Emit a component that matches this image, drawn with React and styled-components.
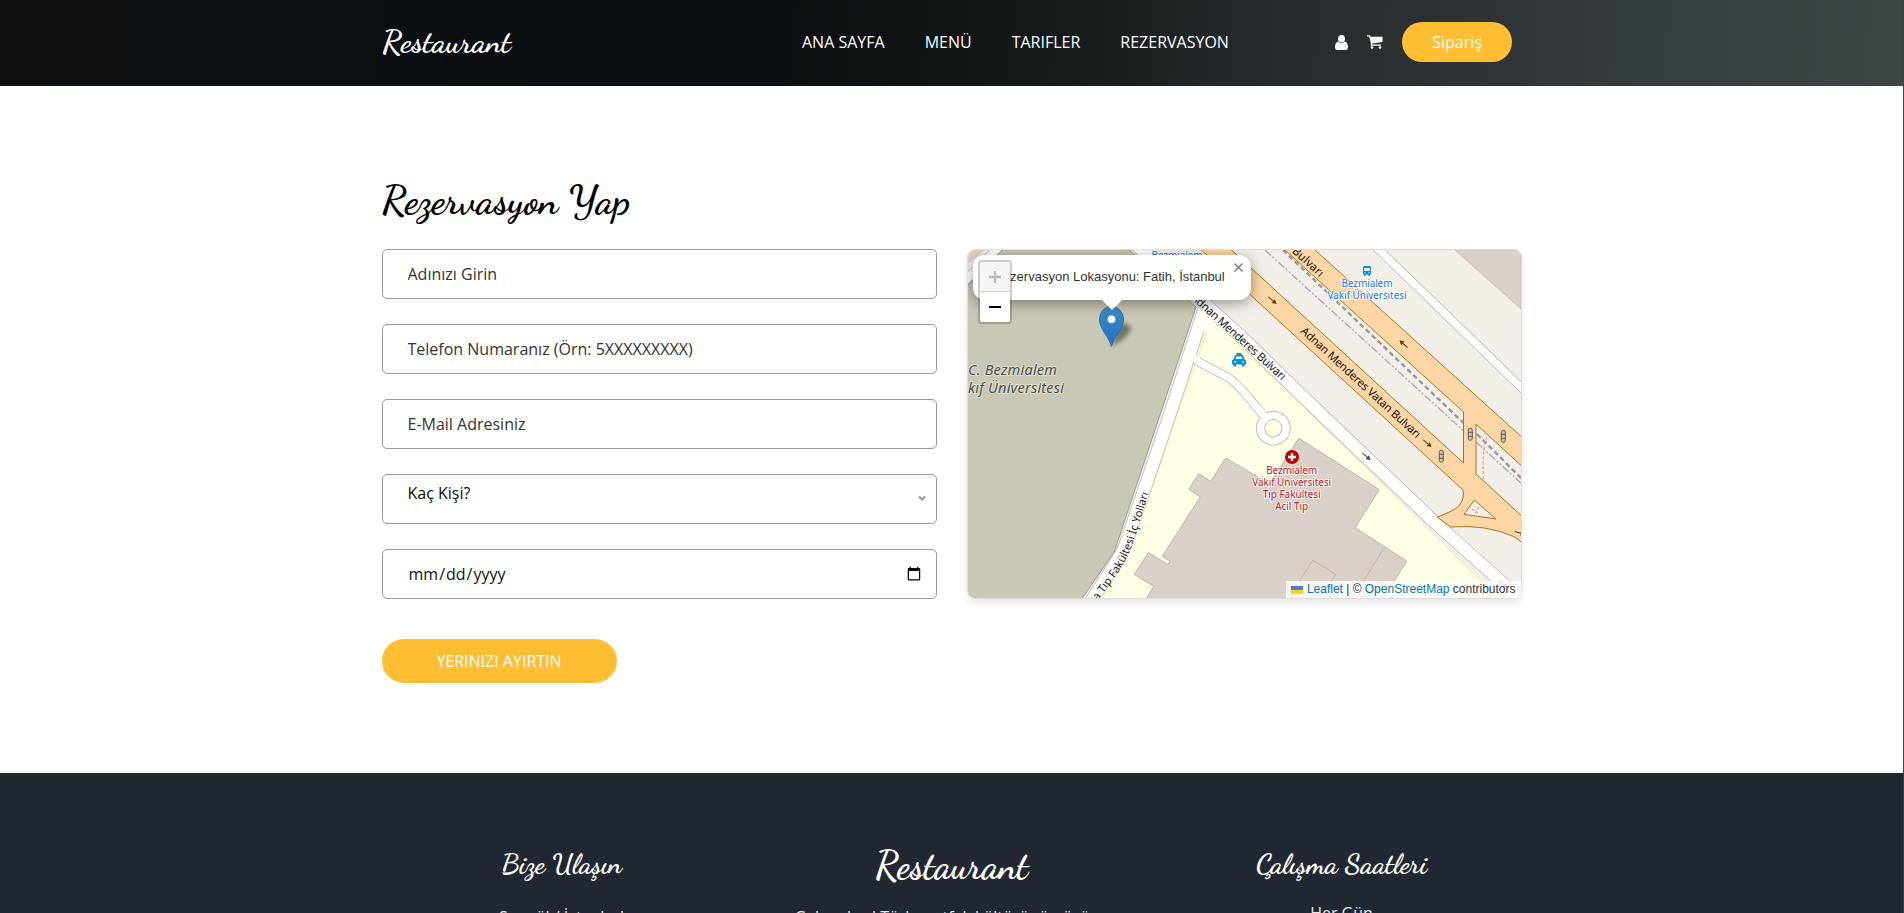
import React from 'react';
import styled, { createGlobalStyle } from 'styled-components';

const GlobalStyle = createGlobalStyle`
  * { box-sizing: border-box; }
  html, body { margin: 0; height: 913px; overflow: hidden; background: #fff; }
  body { font-family: "Open Sans", sans-serif; font-size: 16px; line-height: 24px; color: #0c0c0c; }
`;

const script = '"Dancing Script", cursive';

const Page = styled.div`
  height: 913px;
  overflow: hidden;
  border-right: 1px solid #3b4444;
`;

const Header = styled.header`
  height: 86px;
  margin-right: -1px;
  background: linear-gradient(94deg, #0d0f11 0%, #0c0f11 41%, #101415 48%, #171c1d 57%, #24292b 65%, #2a2f31 72%, #2f3436 79%, #353c3d 85%, #394142 93%, #3e4646 100%);
`;

const Container = styled.div`
  width: 1140px;
  margin: 0 auto;
`;

const NavBar = styled(Container)`
  height: 84px;
  display: flex;
  align-items: center;
`;

const Logo = styled.a`
  width: 420px;
  font: 700 32px/40px ${script};
  color: #fff;
`;

const NavList = styled.nav`
  display: flex;
  gap: 40px;
  width: 533px;
  color: #fff;
  white-space: nowrap;
`;

const NavIcons = styled.div`
  display: flex;
  align-items: center;
  gap: 19px;
  width: 67px;
  color: #fff;
`;

const OrderButton = styled.a`
  width: 110px;
  height: 40px;
  border-radius: 20px;
  background: #ffbe33;
  color: #fff;
  text-align: center;
  line-height: 41px;
`;

const Booking = styled.section`
  height: 687px;
  padding-top: 90px;
`;

const Title = styled.h2`
  margin: 0 0 25px;
  font: 700 40px/48px ${script};
  color: #000;
`;

const Columns = styled.div`
  display: grid;
  grid-template-columns: 555px 555px;
  gap: 30px;
  align-items: start;
`;

const Form = styled.form`
  display: flex;
  flex-direction: column;
  gap: 25px;
`;

const fieldBox = `
  width: 100%;
  height: 50px;
  margin: 0;
  border: 1px solid #999;
  border-radius: 5px;
  background: #fff;
  font: 400 16px/24px "Open Sans", sans-serif;
`;

const Field = styled.input`
  ${fieldBox}
  padding: 0 12px 0 25px;
  color: #111;
  &::placeholder { color: #333; opacity: 1; }
`;

const SelectBox = styled.div`
  ${fieldBox}
  display: flex;
  justify-content: space-between;
  padding: 6px 10px 0 25px;
  svg { margin-top: 14px; }
`;

const SubmitButton = styled.button`
  width: 235px;
  height: 44px;
  margin-top: 15px;
  border: 0;
  border-radius: 22px;
  background: #ffbe33;
  color: #fff;
  font: 400 16px/44px "Open Sans", sans-serif;
  padding: 0;
`;

const MapFrame = styled.div`
  position: relative;
  height: 350px;
  border: 1px solid #ddd;
  border-radius: 8px;
  overflow: hidden;
  box-shadow: 0 4px 8px rgba(0, 0, 0, 0.1);
  font-family: "Liberation Sans", Arial, sans-serif;
`;

const MapSvg = styled.svg`
  display: block;
`;

const Popup = styled.div`
  position: absolute;
  left: 5px;
  top: 5px;
  width: 278px;
  height: 45px;
  padding: 13px 23px 0 21px;
  border-radius: 12px;
  background: #fff;
  box-shadow: 0 3px 14px rgba(0, 0, 0, 0.4);
  color: #333;
  font-size: 13px;
  line-height: 17px;
  white-space: nowrap;
`;

const PopupTip = styled.svg`
  position: absolute;
  left: 129px;
  top: 45px;
`;

const PopupClose = styled.svg`
  position: absolute;
  right: 8px;
  top: 8px;
`;

const ZoomControl = styled.div`
  position: absolute;
  left: 10px;
  top: 10px;
  width: 34px;
  border: 2px solid rgba(0, 0, 0, 0.2);
  border-radius: 4px;
  background-clip: padding-box;
  overflow: hidden;
`;

const ZoomKey = styled.div`
  height: 30px;
  display: flex;
  align-items: center;
  justify-content: center;
  background: ${(p) => (p.$off ? '#f4f4f4' : '#fff')};
  border-bottom: ${(p) => (p.$off ? '1px solid #ccc' : '0')};
  color: ${(p) => (p.$off ? '#bbb' : '#000')};
`;

const Attribution = styled.div`
  position: absolute;
  right: 0;
  bottom: 0;
  height: 17px;
  padding: 0 5px;
  display: flex;
  align-items: center;
  gap: 3.3px;
  background: rgba(255, 255, 255, 0.8);
  color: #333;
  font-size: 12px;
  line-height: 17px;
  white-space: nowrap;
  b { font-weight: 400; color: #0078a8; }
  svg { margin-right: 0.8px; }
`;

const Footer = styled.footer`
  height: 140px;
  background: #222831;
  color: #fff;
  text-align: center;
  overflow: hidden;
`;

const FooterGrid = styled(Container)`
  width: 1170px;
  display: grid;
  grid-template-columns: repeat(3, 1fr);
  padding-top: 74px;
`;

const FooterHeading = styled.h4`
  margin: 0;
  font: 700 ${(p) => p.$size}px/34px ${script};
`;

const BrandHeading = styled(FooterHeading)`
  line-height: 38px;
`;

const FooterText = styled.p`
  margin: ${(p) => p.$top}px 0 0;
  color: #e6e7e8;
  white-space: nowrap;
`;

function Road({ d, w, fill = '#fff', edge = '#bbb' }) {
  return (
    <g fill="none" strokeLinejoin="round">
      <path d={d} stroke={edge} strokeWidth={w + 1.6} />
      <path d={d} stroke={fill} strokeWidth={w} />
    </g>
  );
}

function Arrow({ x, y, angle, color = '#5a3c00' }) {
  return (
    <g transform={`translate(${x} ${y}) rotate(${angle})`} fill={color} stroke={color}>
      <path d="M-5.5 0H2" strokeWidth="1" />
      <path d="M1 -2.5L5.5 0L1 2.5Z" stroke="none" />
    </g>
  );
}

function TrafficLight({ x, y }) {
  return (
    <g transform={`translate(${x} ${y})`} fill="none" stroke="#555" strokeWidth="1">
      <rect x="-2" y="-6" width="4" height="12" rx="2" fill="#d8c7ad" />
      <path d="M-2 -2H2M-2 2H2" />
    </g>
  );
}

function CityMap() {
  const halo = { paintOrder: 'stroke', stroke: 'rgba(255,255,255,.75)', strokeWidth: 2, strokeLinejoin: 'round' };
  return (
    <MapSvg width="553" height="348" viewBox="968 250 553 348" fontFamily='"Noto Sans", sans-serif'>
      <defs>
        <linearGradient id="pin" x1="0" y1="0" x2="0" y2="1">
          <stop offset="0" stopColor="#3b8bc8" />
          <stop offset="1" stopColor="#1f72c4" />
        </linearGradient>
        <filter id="soft" x="-50%" y="-50%" width="200%" height="200%"><feGaussianBlur stdDeviation="2.2" /></filter>
        <path id="clinicWay" d="M1095.5 604L1118 573Q1129 556 1135 537L1155 473" />
      </defs>
      <rect x="968" y="250" width="553" height="348" fill="#f2efe9" />
      <path d="M968 250H985L968 264Z" fill="#d9d0c9" />
      <Road d="M964 282L1001 245" w={8} />
      <path d="M1003 249L967 286V600H1081L1114.3 551.7L1196 307L1128 249Z" fill="#c8c7b3" stroke="#99988a" strokeWidth="1" />
      <path d="M1212 318L1240 346L1316 419L1430 531L1500 600H1098L1128 553L1151 492L1175 420Z" fill="#ffffe5" stroke="#f7f2a0" strokeWidth="1" />
      <path d="M1455 250L1521 309V250Z" fill="#d9d0c9" stroke="#c5b8ad" strokeWidth=".8" />
      <g fill="#d9d0c9" stroke="#c0b1a6" strokeWidth="1">
        <path d="M1225.7 458L1210.7 481.3L1198.7 473.7L1189 489.3L1200.3 497L1162.3 556.3L1170 561L1168 564.7L1148.3 552.7L1134.3 574.3L1153.7 586.3L1146 599H1383L1406.7 561L1355 527.7L1379.3 489.7L1298.7 438.3L1270 484Z" />
        <path d="M1292 593L1312.7 560.3L1335.7 574.3L1320 599M1384.7 547.3L1352 599" fill="none" />
      </g>
      <Road d="M1195 360L1229 378Q1236 383 1243 391L1264 416" w={7.5} />
      <circle cx="1273.3" cy="428.2" r="12.8" fill="none" stroke="#bbb" strokeWidth="9.2" />
      <circle cx="1273.3" cy="428.2" r="12.8" fill="none" stroke="#fff" strokeWidth="7.4" />
      <path d="M1257 407L1266 418" stroke="#fff" strokeWidth="7" />
      <Road d="M1206 304L1168 420L1125 546Q1122 554 1117 561L1090 603" w={12} />
      <Road d="M1135 244L1204 303L1240 335.5L1324 417L1435 522.5L1526 604" w={12} />
      <path d="M1208 312L1202 330" stroke="#fff" strokeWidth="12" />
      <path d="M1199 361L1190 357" stroke="#fff" strokeWidth="6.5" />
      <Road d="M1374 245L1526 392" w={7.5} />
      <g fill="none">
        <path d="M1283 250L1464 423.5M1477 434L1521 478" stroke="#999" strokeWidth="2.4" strokeDasharray="5 3.2" />
        <path d="M1265 250L1467 434M1476 442L1521 483" stroke="#b9a3bd" strokeWidth="1.4" strokeDasharray="8 2 2 2 2 2" />
      </g>
      <path
        fillRule="evenodd"
        fill="#fcd6a4"
        stroke="#a87618"
        strokeWidth="1"
        d="M1196 245L1386.7 420L1463 490Q1465 498 1459 506Q1452 512 1437 517L1450.7 527Q1486 524 1515 537L1526 546V520L1476 474V424L1526 470V441L1309.5 245H1279.5L1463.5 412V463L1226 245ZM1474.3 500L1464 514.3L1496 519Z"
      />
      <path d="M1487 437Q1482 445 1483.5 480M1472 509L1478 513M1479 507L1475 513" fill="none" stroke="#fa8072" strokeWidth="1" strokeDasharray="3 2" />
      <Arrow x={1272.5} y={300.5} angle={41} />
      <Arrow x={1403.5} y={344} angle={222} />
      <Arrow x={1427.5} y={443.5} angle={41} />
      <Arrow x={1366.5} y={456.5} angle={42} color="#444" />
      <Arrow x={1503} y={584.5} angle={42} color="#444" />
      <Arrow x={1520} y={533} angle={15} />
      <TrafficLight x={1470.3} y={434.3} />
      <TrafficLight x={1503.3} y={436.3} />
      <TrafficLight x={1441.3} y={456.3} />

      <g fill="#111" fontSize="11.3">
        <text transform="translate(1190.5 298.5) rotate(42)" textLength="123" {...halo}>Adnan Menderes Bulvarı</text>
        <text transform="translate(1300 332) rotate(42.5)" textLength="158">Adnan Menderes Vatan Bulvarı</text>
        <text transform="translate(1291.5 252) rotate(42)" textLength="38">Bulvarı</text>
        <text fontSize="11" {...halo}><textPath href="#clinicWay" startOffset="4" textLength="120">a Tıp Fakültesi İç Yolları</textPath></text>
      </g>
      <g fontSize="14.5" fontStyle="italic" fill="#4d4d45" {...halo} stroke="rgba(255,255,255,.45)">
        <text x="968" y="375" textLength="89">C. Bezmialem</text>
        <text x="968" y="393" textLength="96">kıf Üniversitesi</text>
      </g>
      <g fontSize="10" textAnchor="middle" fill="#1a78f0" {...halo}>
        <text x="1177" y="258.5" textLength="51">Bezmialem</text>
        <text x="1367" y="286.7" textLength="51">Bezmialem</text>
        <text x="1367" y="298.7" textLength="79">Vakıf Üniversitesi</text>
      </g>
      <g fontSize="10" textAnchor="middle" fill="#c0182c" {...halo}>
        <text x="1291.7" y="473.7" textLength="51">Bezmialem</text>
        <text x="1291.7" y="485.7" textLength="79">Vakıf Üniversitesi</text>
        <text x="1291.7" y="497.7" textLength="58">Tıp Fakültesi</text>
        <text x="1291.7" y="509.7" textLength="33">Acil Tıp</text>
      </g>
      <circle cx="1292" cy="457" r="7" fill="#bf0000" />
      <path d="M1292 453V461M1288 457H1296" stroke="#fff" strokeWidth="2.4" />
      <path
        transform="translate(1363 266)"
        fill="#0092da"
        fillRule="evenodd"
        d="M1.5 0H6.5Q8 0 8 1.5V8.5H7V10H5.5V8.5H2.5V10H1V8.5H0V1.5Q0 0 1.5 0ZM1.2 2V5H6.8V2ZM1.2 6.3V7.3H2.5V6.3ZM5.5 6.3V7.3H6.8V6.3Z"
      />
      <path
        transform="translate(1232 353)"
        fill="#0092da"
        fillRule="evenodd"
        d="M4.5 0H9.5V2H11L12.3 6L14 7.5V11.5H12.5V13.5H10V11.5H4V13.5H1.5V11.5H0V7.5L1.7 6L3 2H4.5ZM4.3 3.5L3.5 6H10.5L9.7 3.5ZM2 8V9.5H4V8ZM10 8V9.5H12V8Z"
      />

      <path d="M1112 345L1120 324Q1129 322 1131 329Q1128 338 1112 346Z" fill="#000" opacity=".42" filter="url(#soft)" />
      <path d="M1111.5 346.5C1109 336 1099.5 330 1099.5 319A12 12.5 0 0 1 1123.5 319C1123.5 330 1114 336 1111.5 346.5Z" fill="url(#pin)" stroke="#2c6ca3" strokeWidth="1" />
      <circle cx="1111.5" cy="319.3" r="4.3" fill="#fff" stroke="#2e6c97" strokeWidth=".6" />
    </MapSvg>
  );
}

export default function App() {
  return (
    <>
      <GlobalStyle />
      <Page>
        <Header>
          <NavBar>
            <Logo>Restaurant</Logo>
            <NavList>
              <span>ANA SAYFA</span>
              <span>MENÜ</span>
              <span>TARIFLER</span>
              <span>REZERVASYON</span>
            </NavList>
            <NavIcons>
              <svg width="13" height="15" viewBox="0 0 13 15" fill="#fff">
                <ellipse cx="6.5" cy="3.8" rx="3.5" ry="3.8" />
                <path d="M3 6.5Q6.5 9.5 10 6.5Q13 7.5 13 12.5Q12.8 15 10.5 15H2.5Q.2 15 0 12.5Q0 7.5 3 6.5Z" />
              </svg>
              <svg width="16" height="14" viewBox="0 0 16 14" fill="#fff">
                <path d="M0 .3H3L3.5 1.7H15.5V7L5.2 8.5L5 9.5H14V10.8H3.5L4 8.8L2.2 1.5H0Z" />
                <circle cx="5" cy="12.5" r="1.3" />
                <circle cx="13" cy="12.5" r="1.3" />
              </svg>
            </NavIcons>
            <OrderButton>Sipariş</OrderButton>
          </NavBar>
        </Header>

        <Booking>
          <Container>
            <Title>Rezervasyon Yap</Title>
            <Columns>
              <Form>
                <Field placeholder="Adınızı Girin" />
                <Field placeholder="Telefon Numaranız (Örn: 5XXXXXXXXX)" />
                <Field placeholder="E-Mail Adresiniz" />
                <SelectBox>
                  Kaç Kişi?
                  <svg width="8" height="7" viewBox="0 0 8 7" fill="none" stroke="#999" strokeWidth="2.2"><path d="M1 1.5L4 4.5L7 1.5" /></svg>
                </SelectBox>
                <Field type="date" />
                <SubmitButton type="button">YERINIZI AYIRTIN</SubmitButton>
              </Form>
              <MapFrame>
                <CityMap />
                <Popup>
                  Rezervasyon Lokasyonu: Fatih, İstanbul
                  <PopupTip width="20" height="10"><path d="M0 0H20L10 10Z" fill="#fff" /></PopupTip>
                  <PopupClose width="9" height="9" stroke="#757575" strokeWidth="1.4"><path d="M.5 .5L8.5 8.5M8.5 .5L.5 8.5" /></PopupClose>
                </Popup>
                <ZoomControl>
                  <ZoomKey $off><svg width="12" height="12" stroke="currentColor" strokeWidth="2.4"><path d="M6 0V12M0 6H12" /></svg></ZoomKey>
                  <ZoomKey><svg width="12" height="12" stroke="currentColor" strokeWidth="2"><path d="M0 6H12" /></svg></ZoomKey>
                </ZoomControl>
                <Attribution>
                  <svg width="12" height="8"><path fill="#4c7be1" d="M0 0h12v4H0z" /><path fill="#ffd500" d="M0 4h12v4H0z" /></svg>
                  <b>Leaflet</b><span>|</span><span>©</span><b>OpenStreetMap</b><span>contributors</span>
                </Attribution>
              </MapFrame>
            </Columns>
          </Container>
        </Booking>

        <Footer>
          <FooterGrid>
            <div>
              <FooterHeading $size={28}>Bize Ulaşın</FooterHeading>
              <FooterText $top={24}>Sarıgöl / İstanbul</FooterText>
            </div>
            <div>
              <BrandHeading $size={38}>Restaurant</BrandHeading>
              <FooterText $top={20}>Geleneksel Türk mutfak kültürünün özüne</FooterText>
            </div>
            <div>
              <FooterHeading $size={28}>Çalışma Saatleri</FooterHeading>
              <FooterText $top={20}>Her Gün</FooterText>
            </div>
          </FooterGrid>
        </Footer>
      </Page>
    </>
  );
}
